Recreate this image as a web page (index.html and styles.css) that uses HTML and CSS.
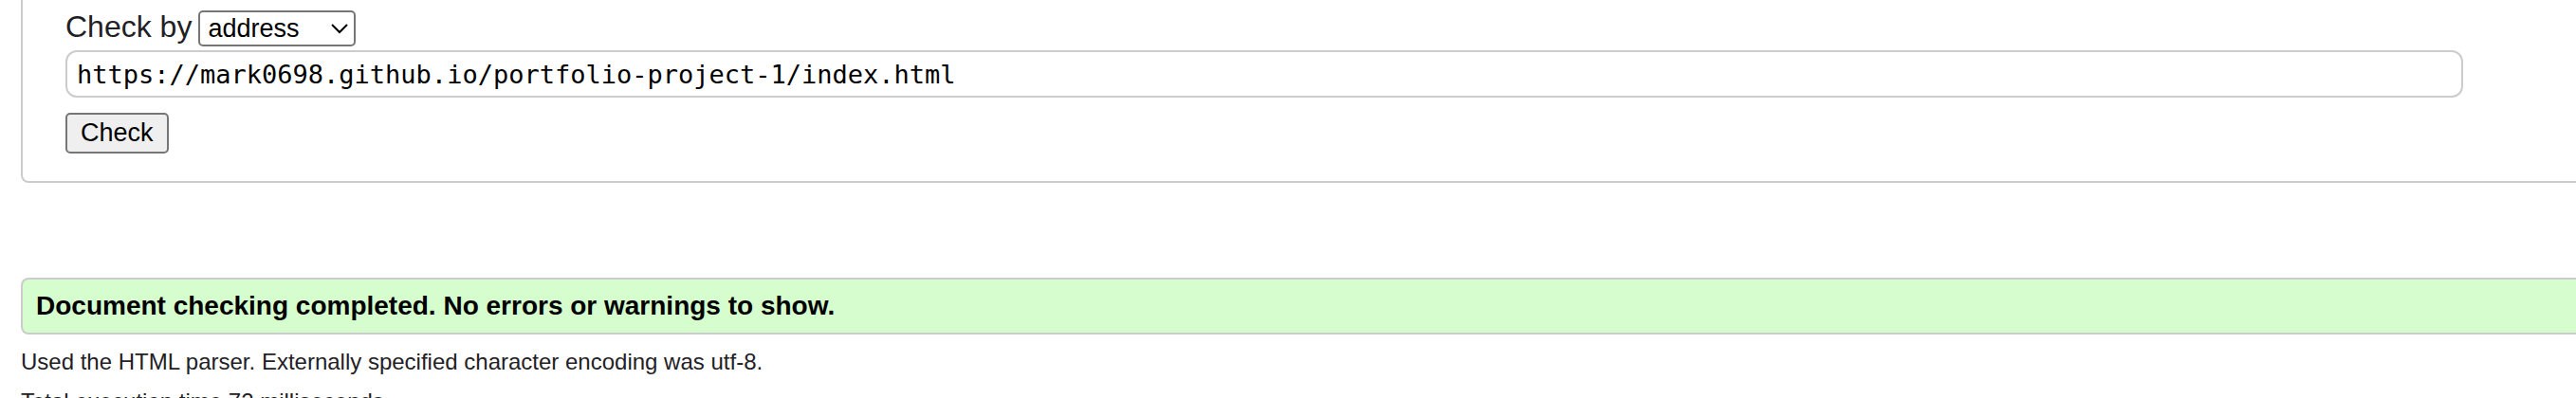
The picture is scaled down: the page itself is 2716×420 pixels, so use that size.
FILE: index.html
```html
<!DOCTYPE html>
<html lang="en">
<head>
<meta charset="utf-8">
<title>Document checker</title>
<link rel="stylesheet" href="styles.css">
</head>
<body>
<main class="page">
  <form class="checker">
    <div class="source">
      <label class="source-label" for="source">Check by</label>
      <span class="picker">
        <select class="picker-select" id="source">
          <option>address</option>
          <option>file upload</option>
          <option>text input</option>
        </select>
        <svg class="picker-arrow" viewBox="0 0 18 12" aria-hidden="true"><path d="M1 1l8 8 8-8"/></svg>
      </span>
    </div>
    <input class="address" type="text" aria-label="Address" value="https://mark0698.github.io/portfolio-project-1/index.html">
    <button class="submit" type="button">Check</button>
  </form>
  <section class="results">
    <p class="success">Document checking completed. No errors or warnings to show.</p>
    <p class="detail">Used the HTML parser. Externally specified character encoding was utf-8.</p>
    <p class="detail">Total execution time 72 milliseconds.</p>
  </section>
</main>
</body>
</html>
```

FILE: styles.css
```css
* {
  box-sizing: border-box;
}

body {
  margin: 0;
  height: 100vh;
  overflow: hidden;
  background: #fff;
  color: #1f2126;
  font-family: "Liberation Sans", Arial, sans-serif;
  font-size: 32px;
}

.page {
  padding-left: 22px;
}

.checker {
  display: flex;
  flex-direction: column;
  align-items: flex-start;
  padding: 11px 119px 29px 45px;
  border: 2px solid #ccc;
  border-width: 0 0 2px 2px;
  border-bottom-left-radius: 8px;
}

.source {
  display: flex;
  align-items: flex-start;
  gap: 7px;
  margin-bottom: 4px;
}

.source-label {
  line-height: 34px;
}

.picker {
  position: relative;
  display: flex;
}

.picker-select {
  appearance: none;
  width: 166px;
  height: 38px;
  padding: 0 8px;
  border: 2px solid #767676;
  border-radius: 5px;
  background: #fff;
  color: #000;
  font-family: inherit;
  font-size: 27px;
}

.picker-arrow {
  position: absolute;
  right: 8px;
  top: 14px;
  width: 18px;
  height: 12px;
  fill: none;
  stroke: #000;
  stroke-width: 2;
  pointer-events: none;
}

.address {
  width: 100%;
  height: 50px;
  padding: 0 10px;
  border: 2px solid #ccc;
  border-radius: 12px;
  background: #fff;
  color: #000;
  font-family: "DejaVu Sans Mono", monospace;
  font-size: 27px;
}

.submit {
  height: 43px;
  margin-top: 16px;
  padding: 0 14px;
  border: 2px solid #767676;
  border-radius: 5px;
  background: #efefef;
  color: #000;
  font-family: inherit;
  font-size: 27px;
}

.results {
  margin-top: 100px;
}

.success {
  margin: 0 0 8px;
  padding: 10px 14px;
  border: 2px solid #ccc;
  border-right: 0;
  border-radius: 8px 0 0 8px;
  background: #d5fdce;
  color: #000;
  font-size: 28px;
  font-weight: bold;
  line-height: 36px;
}

.detail {
  margin: 0;
  font-size: 24px;
  line-height: 42px;
}
```
